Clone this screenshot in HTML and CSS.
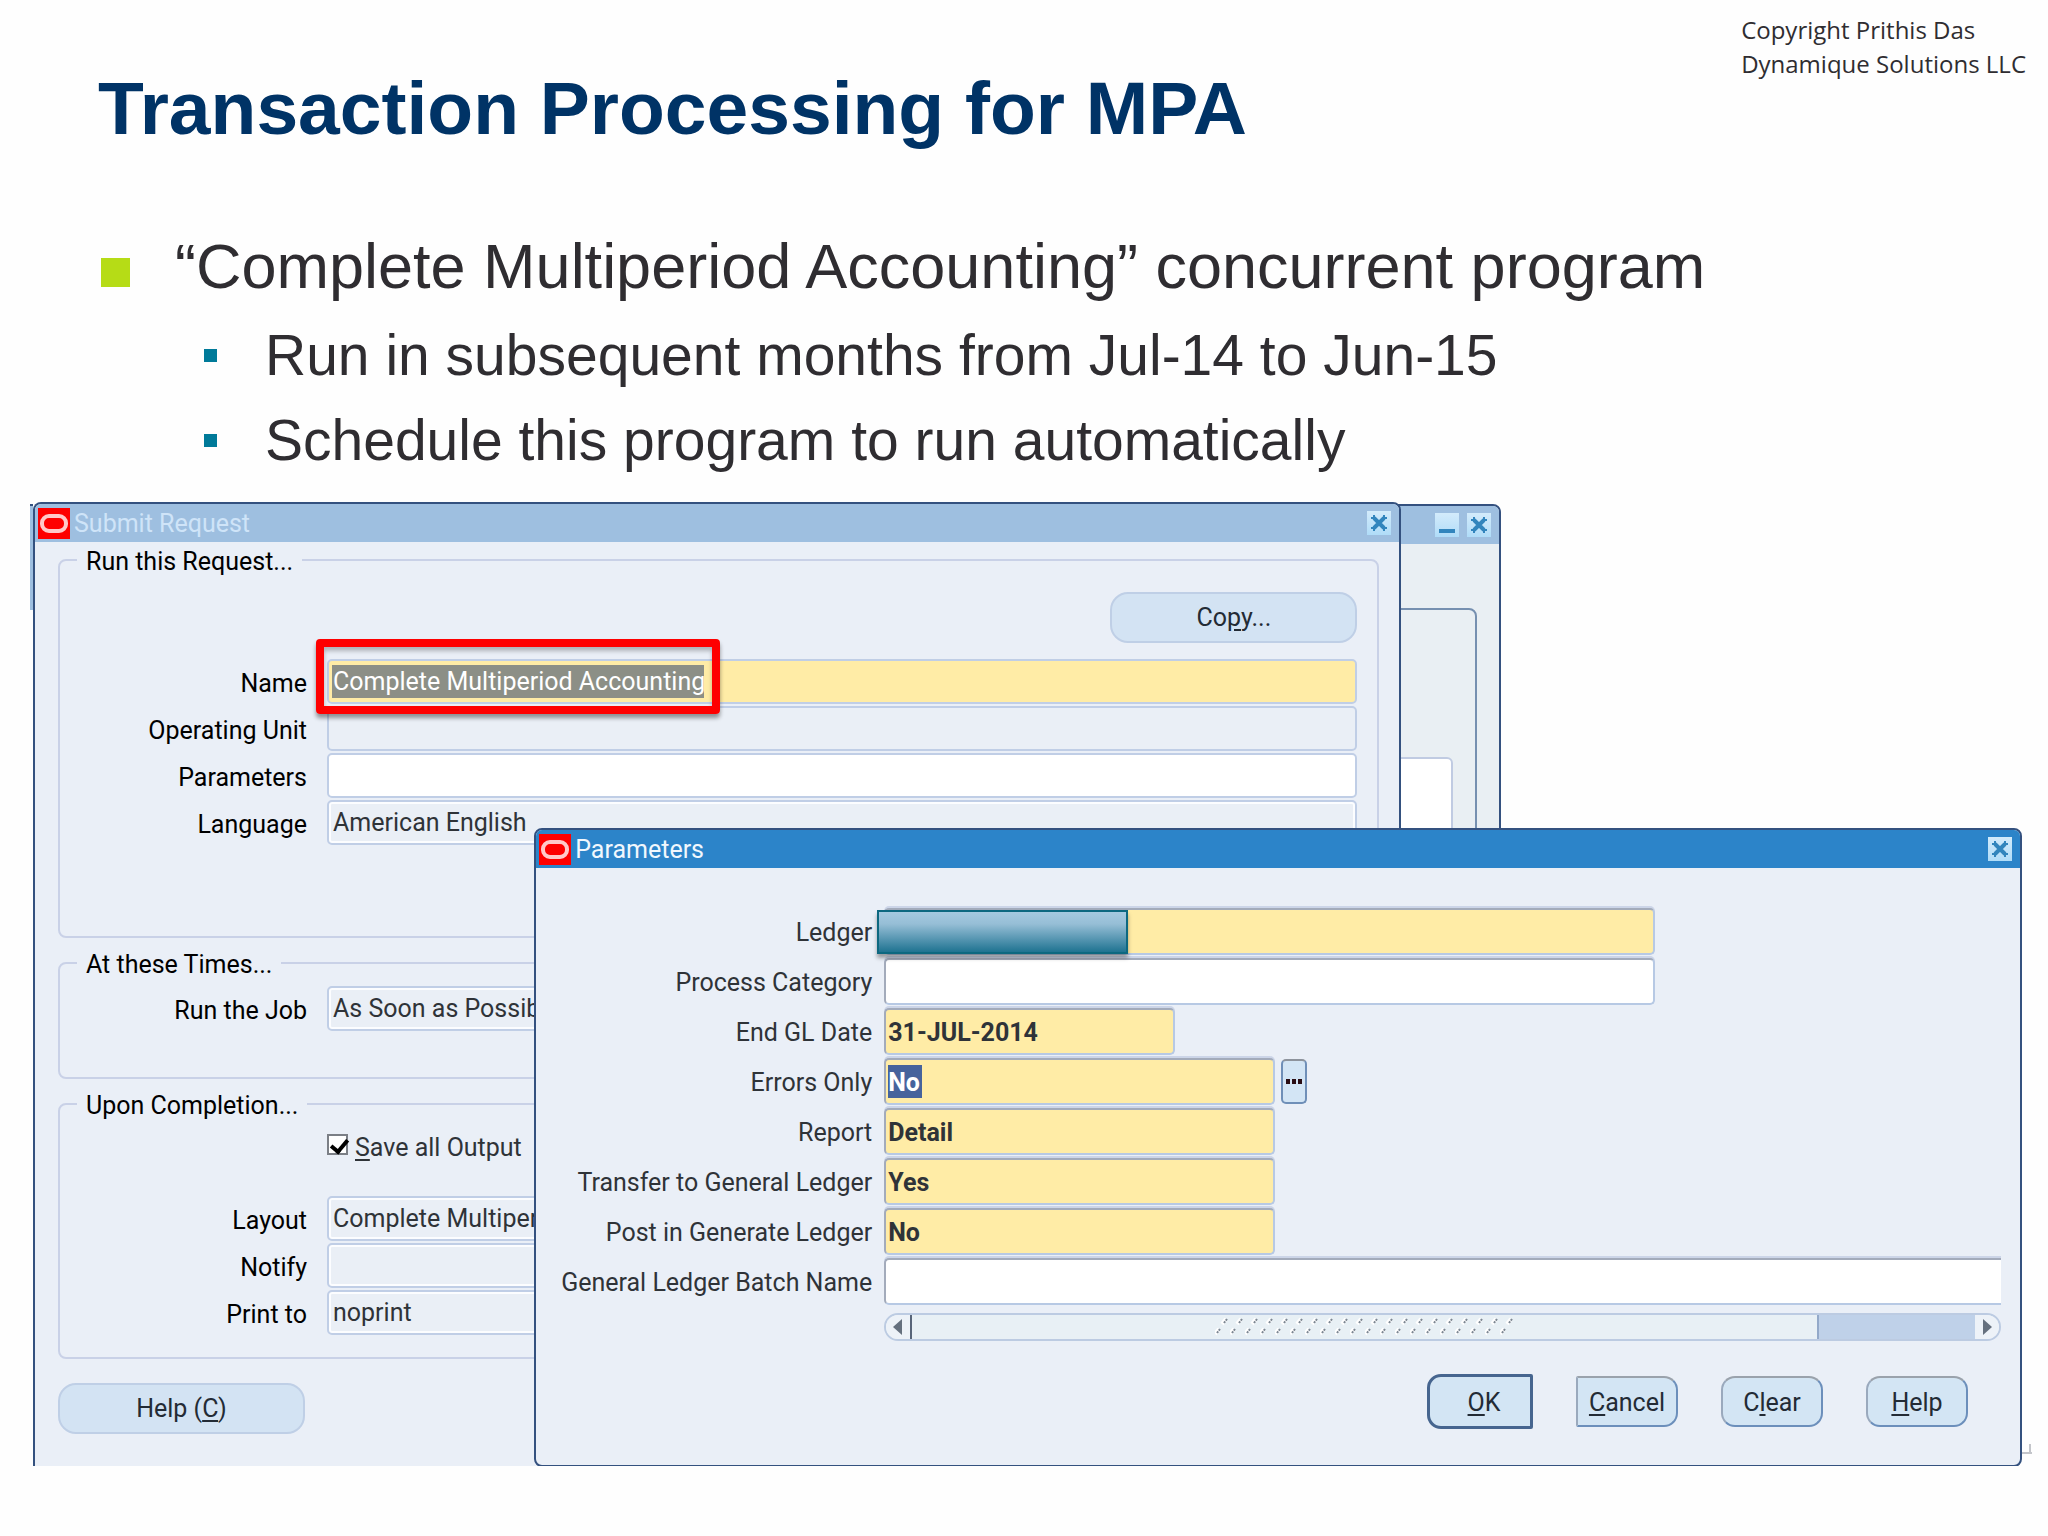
FILE: index.html
```html
<!DOCTYPE html>
<html lang="en">
<head>
  <meta charset="UTF-8">
  <meta name="viewport" content="width=device-width, initial-scale=1">
  <title>Transaction Processing for MPA</title>
  <link rel="stylesheet" href="styles.css">
</head>
<body>

  <!-- Shared icons -->
  <svg class="sprite" aria-hidden="true">
    <symbol id="icon-oracle" viewBox="0 0 32 31">
      <rect width="32" height="31" fill="#fe0000"/>
      <rect x="4" y="8" width="24" height="15" rx="7" fill="none" stroke="#ffc9c9" stroke-width="4"/>
    </symbol>
    <symbol id="icon-close" viewBox="0 0 24 24">
      <path d="M7 7l10 10M17 7L7 17" stroke="#3285bd" stroke-width="4" fill="none"/>
      <path d="M4 7h3V4M17 4v3h3M4 17h3v3M17 20v-3h3" stroke="#3285bd" stroke-width="2" fill="none"/>
    </symbol>
    <symbol id="icon-minimize" viewBox="0 0 24 24">
      <rect x="4" y="16" width="16" height="4" fill="#3285bd"/>
    </symbol>
  </svg>

  <header class="slide-header">
    <h1>Transaction Processing for MPA</h1>
    <p class="copyright">Copyright Prithis Das<br>Dynamique Solutions LLC</p>
  </header>

  <ul class="bullets">
    <li>“Complete Multiperiod Accounting” concurrent program
      <ul>
        <li>Run in subsequent months from Jul-14 to Jun-15</li>
        <li>Schedule this program to run automatically</li>
      </ul>
    </li>
  </ul>

  <main class="desktop">

    <!-- Window in the background -->
    <section class="window window-back">
      <div class="titlebar">
        <button class="win-btn" aria-label="Minimize"><svg><use href="#icon-minimize"/></svg></button>
        <button class="win-btn" aria-label="Close"><svg><use href="#icon-close"/></svg></button>
      </div>
      <div class="back-frame">
        <div class="back-panel"></div>
      </div>
    </section>
    <div class="back-edge"></div>

    <!-- Submit Request -->
    <section class="window window-submit">
      <div class="titlebar">
        <svg class="logo"><use href="#icon-oracle"/></svg>
        <h2>Submit Request</h2>
        <button class="win-btn" aria-label="Close"><svg><use href="#icon-close"/></svg></button>
      </div>

      <form class="submit-body">
        <fieldset class="group group-run">
          <legend>Run this Request...</legend>
          <div class="copy-row">
            <button type="button" class="pill">Co<u>p</u>y...</button>
          </div>
          <div class="fields">
            <label for="name">Name</label>
            <div class="highlighted">
              <input id="name" class="required picked" type="text" value="Complete Multiperiod Accounting">
              <span class="callout"></span>
            </div>
            <label for="unit">Operating Unit</label>
            <input id="unit" class="plain" type="text">
            <label for="params">Parameters</label>
            <input id="params" type="text">
            <label for="language">Language</label>
            <input id="language" class="plain inset" type="text" value="American English">
          </div>
        </fieldset>

        <fieldset class="group group-times">
          <legend>At these Times...</legend>
          <div class="fields">
            <label for="job">Run the Job</label>
            <input id="job" class="plain inset" type="text" value="As Soon as Possible">
          </div>
        </fieldset>

        <fieldset class="group group-done">
          <legend>Upon Completion...</legend>
          <div class="check-row">
            <input id="save" type="checkbox" checked>
            <label for="save"><u>S</u>ave all Output</label>
          </div>
          <div class="fields">
            <label for="layout">Layout</label>
            <input id="layout" class="plain inset" type="text" value="Complete Multiperiod Accounting">
            <label for="notify">Notify</label>
            <input id="notify" class="plain inset" type="text">
            <label for="print">Print to</label>
            <input id="print" class="plain inset" type="text" value="noprint">
          </div>
        </fieldset>

        <button type="button" class="pill">Help (<u>C</u>)</button>
      </form>
    </section>

    <!-- Parameters dialog -->
    <section class="window window-params">
      <div class="titlebar">
        <svg class="logo"><use href="#icon-oracle"/></svg>
        <h2>Parameters</h2>
        <button class="win-btn" aria-label="Close"><svg><use href="#icon-close"/></svg></button>
      </div>

      <form class="params-body">
        <div class="param-fields">
          <label for="ledger">Ledger</label>
          <div class="param-cell">
            <input id="ledger" class="required wide" type="text">
            <span class="redaction"></span>
          </div>
          <label for="category">Process Category</label>
          <input id="category" class="wide" type="text">
          <label for="gldate">End GL Date</label>
          <input id="gldate" class="required short" type="text" value="31-JUL-2014">
          <label for="errors">Errors Only</label>
          <div class="param-cell">
            <input id="errors" class="required medium selected" type="text" value="No">
            <button type="button" class="lov" aria-label="List of values"><svg viewBox="0 0 18 6"><path d="M0 0h4v5H0zM6 0h4v5H6zM12 0h4v5h-4z" fill="#2a0d14"/></svg></button>
          </div>
          <label for="report">Report</label>
          <input id="report" class="required medium" type="text" value="Detail">
          <label for="transfer">Transfer to General Ledger</label>
          <input id="transfer" class="required medium" type="text" value="Yes">
          <label for="post">Post in Generate Ledger</label>
          <input id="post" class="required medium" type="text" value="No">
          <label for="batch">General Ledger Batch Name</label>
          <input id="batch" class="cut" type="text">

          <div class="scrollbar">
            <button type="button" class="arrow arrow-left" aria-label="Scroll left"><svg viewBox="0 0 10 16"><path d="M9 0v16L0 8z" fill="#65707e"/></svg></button>
            <div class="thumb">
              <svg class="grip">
                <defs>
                  <pattern id="grip" width="15" height="20" patternUnits="userSpaceOnUse">
                    <path d="M7 7l4-5M0 17l4-5" stroke="#fff" stroke-width="4"/>
                    <path d="M9 6l3-4M2 16l3-4" stroke="#7d8793" stroke-width="2" stroke-dasharray="2 1"/>
                  </pattern>
                </defs>
                <rect width="100%" height="20" fill="url(#grip)"/>
              </svg>
            </div>
            <div class="track"></div>
            <button type="button" class="arrow arrow-right" aria-label="Scroll right"><svg viewBox="0 0 10 16"><path d="M1 0v16l9-8z" fill="#65707e"/></svg></button>
          </div>
        </div>

        <div class="actions">
          <button type="button" class="btn btn-ok"><u>O</u>K</button>
          <button type="button" class="btn btn-cancel"><u>C</u>ancel</button>
          <button type="button" class="btn">C<u>l</u>ear</button>
          <button type="button" class="btn"><u>H</u>elp</button>
        </div>
      </form>
    </section>

    <!-- Faint leftovers behind the dialog corner -->
    <svg class="corner-marks" viewBox="0 0 50 36" aria-hidden="true">
      <path d="M40 9h10M48 0v9" stroke="#c3c5ca" stroke-width="2" fill="none"/>
      <path d="M3 33l4-3M6 25l3 1M21 22v6M20 29l-3 6M26 27l5 6M35 34l5-3M43 31l6-5M13 34l4-2" stroke="#a4a6ad" stroke-width="2" fill="none"/>
    </svg>
  </main>

</body>
</html>
```
FILE: styles.css
```css
* {
  box-sizing: border-box;
}

body {
  margin: 0;
  background: #fefefe;
  color: #2f2d31;
  font-family: "Liberation Sans", Arial, sans-serif;
}

h1, h2, p, ul {
  margin: 0;
  padding: 0;
}

.sprite {
  position: absolute;
  width: 0;
  height: 0;
}

/* Slide heading */
.slide-header {
  display: flex;
  justify-content: space-between;
  align-items: flex-start;
  padding: 13px 22px 0 98px;
}

.slide-header h1 {
  padding-top: 53px;
  font-size: 75px;
  line-height: 84px;
  color: #003366;
}

.copyright {
  font-family: "Open Sans", sans-serif;
  font-size: 24px;
  line-height: 34px;
}

/* Bullets */
.bullets {
  list-style: none;
  padding: 79px 0 28px 101px;
  font-size: 63px;
  line-height: 74px;
}

.bullets > li {
  display: grid;
  grid-template-columns: 74px 1fr;
}

.bullets > li::before {
  content: "";
  width: 29px;
  height: 29px;
  margin-top: 29px;
  background: #b6dc16;
}

.bullets ul {
  grid-column: 2;
  list-style: none;
  padding: 18px 0 0 29px;
  display: grid;
  gap: 17px;
  font-size: 57px;
  line-height: 68px;
}

.bullets ul li {
  display: flex;
}

.bullets ul li::before {
  content: "";
  width: 13px;
  height: 13px;
  margin: 28px 48px 0 0;
  background: #007a99;
}

/* Windows */
.desktop {
  position: relative;
  margin: 0 26px 0 33px;
  font-family: Roboto, sans-serif;
  font-size: 25px;
  line-height: 30px;
}

.window {
  background: #eaeff7;
  border: 2px solid #34517f;
  border-radius: 8px 8px 0 0;
  overflow: hidden;
}

.titlebar {
  display: flex;
  align-items: center;
  gap: 4px;
  height: 38px;
  padding: 0 8px 0 3px;
  background: #9ebfe0;
}

.titlebar h2 {
  flex: 1;
  padding-top: 2px;
  font-size: 25px;
  font-weight: 400;
  color: #cfe4f8;
}

.logo {
  width: 32px;
  height: 31px;
}

.win-btn {
  width: 24px;
  height: 24px;
  padding: 0;
  border: none;
  background: linear-gradient(#d3ebfb, #b0dcf8);
}

.win-btn svg {
  display: block;
  width: 24px;
  height: 24px;
}

.window-back {
  position: absolute;
  top: 2px;
  left: 0;
  width: 73.8%;
  height: 400px;
  background: #e9eff3;
}

.window-back .titlebar {
  justify-content: flex-end;
  gap: 8px;
}

.back-frame {
  height: 400px;
  margin: 64px 22px 0 0;
  padding: 147px 22px 0 0;
  border: 2px solid #7690b0;
  border-radius: 8px;
}

.back-panel {
  height: 240px;
  background: #fff;
  border: 2px solid #c0cbe2;
  border-radius: 6px;
}

.back-edge {
  position: absolute;
  top: 2px;
  left: -3px;
  width: 3px;
  height: 106px;
  background: #9ebfe0;
  border-top: 2px solid #34517f;
}

.window-submit {
  position: relative;
  width: 68.8%;
  border-bottom: none;
}

.submit-body {
  padding: 3px 20px 32px 23px;
}

/* Field groups */
.group {
  margin: 0;
  border: 2px solid #c9d1e7;
  border-radius: 8px;
  padding: 0 20px 0 0;
  color: #000;
}

.group legend {
  height: 30px;
  margin-left: 17px;
  padding: 2px 9px 0;
}

.group-run {
  padding-top: 17px;
  padding-bottom: 91px;
}

.group-times {
  margin-top: 10px;
  padding-top: 8px;
  padding-bottom: 46px;
}

.group-done {
  margin: 10px 0 24px;
  padding-top: 12px;
  padding-bottom: 22px;
}

.copy-row {
  display: flex;
  justify-content: flex-end;
  margin-bottom: 16px;
}

.fields {
  display: grid;
  grid-template-columns: 247px 1fr;
  align-items: center;
  gap: 2px 20px;
}

.fields label {
  padding-top: 4px;
  text-align: right;
}

input[type="text"] {
  width: 100%;
  height: 45px;
  padding: 0 4px;
  border: 2px solid #c0cee6;
  border-radius: 5px;
  background-color: #fff;
  color: #2f3338;
  font: inherit;
}

input.plain {
  background-color: #eaeff6;
}

input.inset {
  box-shadow: inset 0 0 0 2px #fcfdff;
}

input.required {
  background-color: #ffeca6;
}

/* Selected text inside the name field */
input.picked {
  color: #fff;
  background-image: linear-gradient(#8c8f86, #8c8f86);
  background-size: 372px 33px;
  background-position: 3px 4px;
  background-repeat: no-repeat;
}

.highlighted {
  position: relative;
}

.callout {
  position: absolute;
  top: -20px;
  left: -11px;
  width: 404px;
  height: 75px;
  border: 8px solid #fe0000;
  border-radius: 4px;
  box-shadow: 0 4px 4px rgba(0, 0, 0, 0.4), inset 0 4px 4px rgba(0, 0, 0, 0.25);
}

.check-row {
  display: flex;
  align-items: center;
  gap: 7px;
  margin: 0 0 33px 267px;
  color: #2f3338;
}

.check-row label {
  padding-top: 2px;
}

.check-row input {
  appearance: none;
  width: 21px;
  height: 21px;
  margin: 0 0 6px;
  border: 2px solid #7b7f86;
  background: #fff;
  position: relative;
}

.check-row input:checked::after {
  content: "";
  position: absolute;
  left: 5px;
  top: 0;
  width: 7px;
  height: 13px;
  border: solid #000;
  border-width: 0 4px 4px 0;
  transform: rotate(40deg);
}

.pill {
  width: 247px;
  height: 51px;
  border: 2px solid #bfcfe6;
  border-radius: 18px;
  background: #d3e3f3;
  color: #232b35;
  font: inherit;
}

u {
  text-underline-offset: 3px;
}

/* Parameters dialog */
.window-params {
  position: absolute;
  top: 326px;
  left: 25.2%;
  right: 0;
  border-radius: 8px;
}

.window-params .titlebar {
  background: #2c84c9;
}

.window-params .titlebar h2 {
  color: #f1f7fd;
}

.params-body {
  padding: 40px 19px 36px 0;
}

.param-fields {
  display: grid;
  grid-template-columns: 336px 1fr;
  align-items: center;
  gap: 3px 12px;
}

.param-fields label {
  padding-top: 2px;
  text-align: right;
  color: #2f3338;
}

.param-fields input[type="text"] {
  height: 47px;
  padding: 2px 2px 0;
  border-color: #a3abbb #b7c9e4 #b7c9e4 #a3abbb;
  box-shadow: 0 -2px 0 #ccd5e8;
  font-weight: 700;
}

.param-fields .wide {
  width: 69%;
}

.param-fields .medium {
  width: 35%;
}

.param-fields .short {
  width: 26%;
}

.param-fields input.cut {
  border-right: none;
  border-radius: 5px 0 0 5px;
}

.param-fields input.selected {
  color: #fff;
  background-image: linear-gradient(#46639c, #46639c);
  background-size: 34px 33px;
  background-position: 2px 5px;
  background-repeat: no-repeat;
}

.param-cell {
  position: relative;
  display: flex;
  align-items: center;
  gap: 6px;
}

.lov {
  width: 26px;
  height: 45px;
  padding: 0 3px;
  border: 2px solid #6f8fb8;
  border-top-color: #8d939c;
  border-radius: 5px;
  background: #d3e5f5;
}

.lov svg {
  display: block;
  width: 18px;
  height: 6px;
}

/* Box that hides the ledger name */
.redaction {
  position: absolute;
  top: 2px;
  left: -7px;
  width: 251px;
  height: 44px;
  border: 2px solid #0d6880;
  background: linear-gradient(#a5c9e0, #96bed6 30%, #1f7391);
  box-shadow: 0 4px 4px rgba(0, 0, 0, 0.35);
}

.scrollbar {
  grid-column: 2;
  display: flex;
  height: 28px;
  margin-top: 5px;
  border: 2px solid #bccbe2;
  border-radius: 14px;
  background: #eaf0f6;
  overflow: hidden;
}

.arrow {
  display: flex;
  align-items: center;
  justify-content: center;
  width: 24px;
  padding: 0;
  border: none;
  background: #edf2f8;
}

.arrow svg {
  width: 10px;
  height: 16px;
}

.thumb {
  flex: 1;
  display: flex;
  align-items: center;
  justify-content: center;
  border-left: 2px solid #586579;
  border-right: 2px solid #93a9c9;
  background: #e8f0f5;
}

.grip {
  width: 300px;
  height: 20px;
}

.track {
  width: 14%;
  background: #bfd1e9;
}

.actions {
  display: flex;
  justify-content: flex-end;
  align-items: center;
  gap: 43px;
  margin: 33px 33px 0 0;
}

.btn {
  width: 102px;
  height: 51px;
  padding: 2px 0 0;
  border: 2px solid #6c8fbb;
  border-top-color: #9aa2ac;
  border-left-color: #9aa9bd;
  border-radius: 14px;
  background: #d3e5f4;
  color: #232b35;
  font: inherit;
}

.btn-cancel {
  border-radius: 2px 14px 14px 2px;
}

.btn-ok {
  width: 106px;
  height: 55px;
  padding-left: 8px;
  border: 3px solid #46658f;
  border-radius: 14px 2px 2px 14px;
}

.corner-marks {
  position: absolute;
  right: -10px;
  bottom: -14px;
  width: 50px;
  height: 36px;
}
```
